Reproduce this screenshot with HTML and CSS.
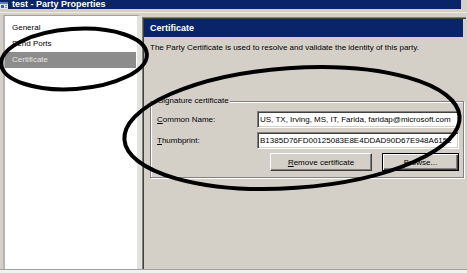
FILE: index.html
```html
<!DOCTYPE html>
<html>
<head>
<meta charset="utf-8">
<title>test - Party Properties</title>
<link rel="stylesheet" href="styles.css">
</head>
<body>
<div class="window">
  <div class="titlebar">
    <svg class="app-icon" width="8" height="7" viewBox="0 0 8 7">
      <rect x="0" y="0" width="8" height="7" fill="#dfe6f2"/>
      <rect x="0" y="0" width="8" height="2" fill="#5b7fc6"/>
      <rect x="1" y="3" width="3" height="3" fill="#3a62b8"/>
      <rect x="5" y="3" width="2" height="1" fill="#8a8a8a"/>
      <rect x="5" y="5" width="2" height="1" fill="#8a8a8a"/>
    </svg>
    <span class="title-text">test - Party Properties</span>
  </div>
  <div class="main">
    <div class="nav">
      <ul class="list">
        <li class="item">General</li>
        <li class="item">Send Ports</li>
        <li class="item selected">Certificate</li>
      </ul>
    </div>
    <div class="panel">
      <div class="header">Certificate</div>
      <p class="desc">The Party Certificate is used to resolve and validate the identity of this party.</p>
      <fieldset class="group">
        <legend class="legend">Signature certificate</legend>
        <div class="row">
          <label class="label"><u>C</u>ommon Name:</label>
          <input class="field" type="text" value="US, TX, Irving, MS, IT, Farida, faridap@microsoft.com" readonly>
        </div>
        <div class="row">
          <label class="label"><u>T</u>humbprint:</label>
          <input class="field" type="text" value="B1385D76FD00125083E8E4DDAD90D67E948A6152" readonly>
        </div>
        <div class="buttons">
          <button class="btn btn-remove"><u>R</u>emove certificate</button>
          <button class="btn btn-default btn-browse">Browse...</button>
        </div>
      </fieldset>
    </div>
  </div>
  <div class="footer"></div>
  <svg class="marks" width="467" height="273" viewBox="0 0 467 273">
    <ellipse cx="74" cy="59" rx="73" ry="30" transform="rotate(-4 74 59)" fill="none" stroke="#000" stroke-width="4"/>
    <ellipse cx="292" cy="128" rx="168" ry="60" transform="rotate(-4 292 128)" fill="none" stroke="#000" stroke-width="4"/>
  </svg>
</div>
</body>
</html>
```

FILE: styles.css
```css
* {
  box-sizing: border-box;
}

html, body {
  margin: 0;
  padding: 0;
}

body {
  width: 467px;
  height: 273px;
  overflow: hidden;
  background: #d4d0c8;
  font-family: "Liberation Sans", Arial, sans-serif;
  font-size: 8px;
  color: #000;
}

.window {
  position: relative;
  width: 467px;
  height: 273px;
  background: #d4d0c8;
  display: flex;
  flex-direction: column;
}

.titlebar {
  height: 9px;
  margin-right: 6px;
  margin-bottom: 3px;
  background: #0a246a;
  color: #fff;
  display: flex;
  align-items: center;
  gap: 4px;
  flex-shrink: 0;
}

.app-icon {
  align-self: flex-start;
  margin-top: 2px;
  flex-shrink: 0;
}

.title-text {
  font-weight: bold;
  font-size: 9px;
  line-height: 9px;
  white-space: nowrap;
}

.main {
  flex: 1;
  display: flex;
  border-top: 1px solid #ecebe8;
  border-bottom: 1px solid #a0a0a0;
  padding: 2px 1px 0 3px;
  min-height: 0;
}

.nav {
  width: 139px;
  display: flex;
  flex-shrink: 0;
}

.list {
  flex: 1;
  list-style: none;
  margin: 0;
  padding: 4px 1px 0 0;
  background: #fff;
  border-top: 1px solid #a0a0a0;
  border-left: 2px solid #b4b4b4;
  border-right: 5px solid #e3e2de;
}

.item {
  height: 16px;
  line-height: 16px;
  padding-left: 7px;
  white-space: nowrap;
}

.item.selected {
  background: #8c8c8c;
  color: #e4e4e4;
}

.panel {
  flex: 1;
  margin-top: 2px;
  border-left: 1px solid #808080;
  border-top: 1px solid #808080;
  box-shadow: inset 1px 1px 0 #404040;
  padding: 1px 2px 0 1px;
  display: flex;
  flex-direction: column;
}

.header {
  height: 18px;
  line-height: 18px;
  background: #0a246a;
  color: #fff;
  font-weight: bold;
  font-size: 9px;
  padding-left: 6px;
  margin-right: 1px;
}

.desc {
  margin: 6px 0 0 6px;
  line-height: 10px;
  white-space: nowrap;
}

.group {
  margin: 43px 0 0 6px;
  padding: 5px 4px 6px 6px;
  border: 1px solid #808080;
  box-shadow: inset 1px 1px 0 #fff, 1px 1px 0 #fff;
  min-width: 0;
}

.legend {
  padding: 0 1px;
  line-height: 10px;
  background: #d4d0c8;
}

.row {
  display: flex;
  align-items: center;
  height: 17px;
  margin-bottom: 4px;
}

.label {
  width: 100px;
  flex-shrink: 0;
  line-height: 10px;
}

.field {
  flex: 1;
  min-width: 0;
  height: 17px;
  margin: 0;
  padding: 0 2px;
  font-family: "Liberation Sans", Arial, sans-serif;
  font-size: 8px;
  color: #000;
  background: #fff;
  border: 1px solid;
  border-color: #808080 #fff #fff #808080;
  box-shadow: inset 1px 1px 0 #404040, inset -1px -1px 0 #d4d0c8;
  outline: none;
}

.buttons {
  display: flex;
  justify-content: flex-end;
  gap: 10px;
  height: 18px;
}

.btn {
  height: 18px;
  margin: 0;
  padding: 0;
  font-family: "Liberation Sans", Arial, sans-serif;
  font-size: 8px;
  color: #000;
  background: #d4d0c8;
  border: 1px solid;
  border-color: #fff #404040 #404040 #fff;
  box-shadow: inset -1px -1px 0 #808080;
}

.btn-remove {
  width: 102px;
}

.btn-browse {
  width: 77px;
}

.btn-default {
  border: 1px solid #000;
  box-shadow: inset 1px 1px 0 #fff, inset -1px -1px 0 #404040, inset -2px -2px 0 #808080;
}

.footer {
  height: 3px;
  background: #f2f2f2;
  flex-shrink: 0;
}

.marks {
  position: absolute;
  left: 0;
  top: 0;
  pointer-events: none;
}
```
